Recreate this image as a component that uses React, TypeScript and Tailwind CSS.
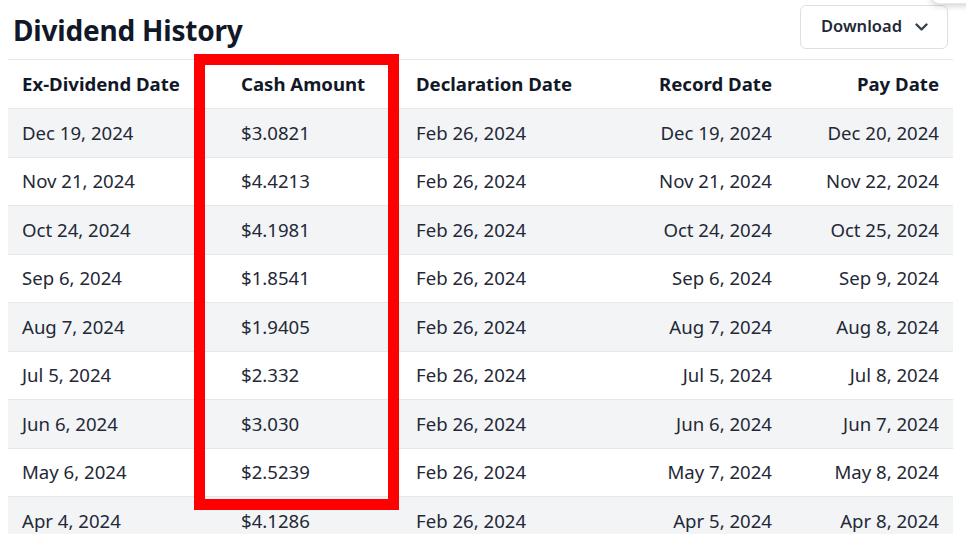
import React from 'react';

type Row = { ex: string; cash: string; decl: string; rec: string; pay: string };

const rows: Row[] = [
  { ex: 'Dec 19, 2024', cash: '$3.0821', decl: 'Feb 26, 2024', rec: 'Dec 19, 2024', pay: 'Dec 20, 2024' },
  { ex: 'Nov 21, 2024', cash: '$4.4213', decl: 'Feb 26, 2024', rec: 'Nov 21, 2024', pay: 'Nov 22, 2024' },
  { ex: 'Oct 24, 2024', cash: '$4.1981', decl: 'Feb 26, 2024', rec: 'Oct 24, 2024', pay: 'Oct 25, 2024' },
  { ex: 'Sep 6, 2024', cash: '$1.8541', decl: 'Feb 26, 2024', rec: 'Sep 6, 2024', pay: 'Sep 9, 2024' },
  { ex: 'Aug 7, 2024', cash: '$1.9405', decl: 'Feb 26, 2024', rec: 'Aug 7, 2024', pay: 'Aug 8, 2024' },
  { ex: 'Jul 5, 2024', cash: '$2.332', decl: 'Feb 26, 2024', rec: 'Jul 5, 2024', pay: 'Jul 8, 2024' },
  { ex: 'Jun 6, 2024', cash: '$3.030', decl: 'Feb 26, 2024', rec: 'Jun 6, 2024', pay: 'Jun 7, 2024' },
  { ex: 'May 6, 2024', cash: '$2.5239', decl: 'Feb 26, 2024', rec: 'May 7, 2024', pay: 'May 8, 2024' },
  { ex: 'Apr 4, 2024', cash: '$4.1286', decl: 'Feb 26, 2024', rec: 'Apr 5, 2024', pay: 'Apr 8, 2024' },
];

function ChevronDown() {
  return (
    <svg width="13" height="8" viewBox="0 0 13 8" fill="none" stroke="#374151" strokeWidth="2.4" strokeLinecap="round" strokeLinejoin="round">
      <path d="M1.5 1.5l5 5 5-5" />
    </svg>
  );
}

export default function App() {
  return (
    <div
      className="relative h-[534px] w-[966px] overflow-hidden bg-white text-[#1f2937]"
      style={{ fontFamily: '"Noto Sans", "Open Sans", sans-serif' }}
    >
      {/* corner of a popover peeking in at the top */}
      <div className="absolute left-[931px] top-[-40px] h-[44px] w-[60px] rounded-lg border border-gray-200 bg-white shadow-[0_2px_6px_rgba(0,0,0,0.18)]" />

      <div className="flex h-[59px] items-center justify-between pl-[13px] pr-[18px]">
        <h1 className="text-[28px] font-bold tracking-[-0.2px] text-[#111827]">Dividend History</h1>
        <button className="mb-[6px] flex h-[44px] w-[148px] items-center gap-[13px] rounded-md border border-[#dcdfe4] bg-white pl-[20px] text-[16.5px] font-semibold text-[#1f2937]">
          Download
          <ChevronDown />
        </button>
      </div>

      <table className="ml-[8px] w-[945px] table-fixed border-collapse text-[18.6px]">
        <colgroup>
          <col className="w-[219px]" />
          <col className="w-[175px]" />
          <col className="w-[192px]" />
          <col className="w-[192px]" />
          <col className="w-[167px]" />
        </colgroup>
        <thead>
          <tr className="h-[49px] border-y border-[#e5e7eb] font-bold text-[#111827]">
            <th className="px-[14px] text-left">Ex-Dividend Date</th>
            <th className="px-[14px] text-left">Cash Amount</th>
            <th className="px-[14px] text-left">Declaration Date</th>
            <th className="px-[14px] text-right">Record Date</th>
            <th className="px-[14px] text-right">Pay Date</th>
          </tr>
        </thead>
        <tbody>
          {rows.map((r, i) => (
            <tr key={r.ex} className={`h-[48.5px] border-b border-[#e5e7eb] ${i % 2 === 0 ? 'bg-[#f3f4f6]' : 'bg-white'}`}>
              <td className="px-[14px]">{r.ex}</td>
              <td className="px-[14px]">{r.cash}</td>
              <td className="px-[14px]">{r.decl}</td>
              <td className="px-[14px] text-right">{r.rec}</td>
              <td className="px-[14px] text-right">{r.pay}</td>
            </tr>
          ))}
        </tbody>
      </table>

      {/* red highlight annotation around the Cash Amount column */}
      <div className="pointer-events-none absolute left-[194px] top-[54px] h-[456px] w-[205px] border-[11px] border-[#ff0000]" />
    </div>
  );
}
